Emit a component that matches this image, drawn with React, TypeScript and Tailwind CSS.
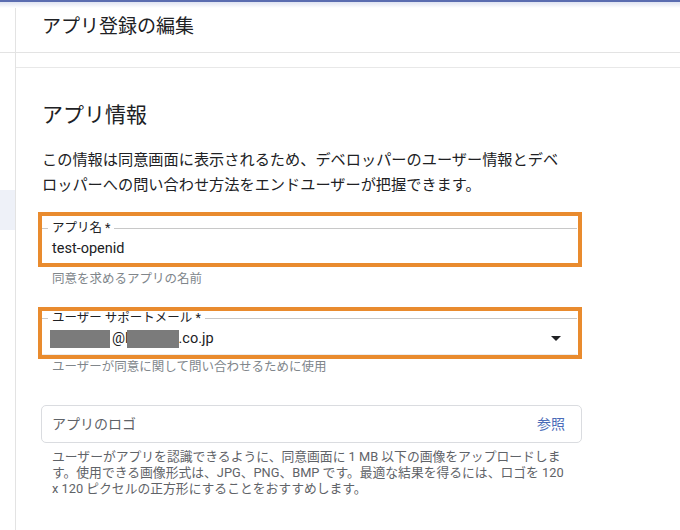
import React from 'react';

const FONT = "font-['Roboto','Noto_Sans_CJK_JP',sans-serif]";

const OutlinedLabel = ({ text }: { text: string }) => (
  <div className="flex items-center h-[14px]">
    <div className="w-[6px] h-px bg-[#c8c8c8]" />
    <span className="px-[4px] text-[12.5px] leading-[14px] text-[#202124]">{text}</span>
    <div className="flex-1 h-px bg-[#c8c8c8]" />
  </div>
);

const App = () => {
  return (
    <div className={`relative w-[680px] h-[530px] overflow-hidden bg-white text-[#202124] ${FONT}`}>
      {/* top app bar shadow */}
      <div className="absolute top-0 left-0 right-0 h-[2px] bg-[#5b6db0]" />
      <div className="absolute top-[2px] left-0 right-0 h-[6px] bg-gradient-to-b from-[#dfe3f1] to-white" />

      <div className="flex h-full">
        {/* left nav strip */}
        <div className="w-[16px] shrink-0 flex flex-col border-r border-[#e3e3e3]">
          <div className="h-[53px] border-b border-[#e3e3e3]" />
          <div className="h-[137px]" />
          <div className="h-[40px] bg-[#eef1f8]" />
        </div>

        <div className="flex-1 flex flex-col">
          <div className="h-[53px] border-b border-[#e3e3e3] flex items-center pl-[26px] pt-[1px]">
            <h1 className="text-[19px] leading-none text-[#202124]">アプリ登録の編集</h1>
          </div>
          <div className="h-[15px] border-b border-[#e8e8e8]" />

          <div className="pl-[26px] flex flex-col">
            <h2 className="mt-[32px] text-[21px] leading-[30px] text-[#202124]">アプリ情報</h2>
            <p className="mt-[18px] text-[15.2px] leading-[25px] text-[#202124] whitespace-nowrap">
              この情報は同意画面に表示されるため、デベロッパーのユーザー情報とデベ
              <br />
              ロッパーへの問い合わせ方法をエンドユーザーが把握できます。
            </p>

            {/* App name */}
            <div className="mt-[14px] ml-[-4px] w-[544px] h-[55px] border-4 border-[#e98b2e] flex flex-col pr-[1px] pt-[5px]">
              <OutlinedLabel text="アプリ名 *" />
              <div className="pl-[10px] mt-[4px] text-[14.5px] leading-[20px] text-[#202124]">test-openid</div>
            </div>
            <div className="pl-[10px] mt-[4px] text-[12.5px] leading-[16px] text-[#80868b]">同意を求めるアプリの名前</div>

            {/* Support email */}
            <div className="mt-[20px] ml-[-4px] w-[544px] h-[52px] border-4 border-[#e98b2e] flex flex-col pr-[1px]">
              <OutlinedLabel text="ユーザー サポートメール *" />
              <div className="flex-1 flex items-center pl-[8px] pr-[16px] pb-[2px] border-b border-[#ececec]">
                <div className="flex items-center text-[14.5px] leading-[20px] text-[#202124]">
                  <span className="w-[60px] h-[18px] bg-[#7b7b7b]" />
                  <span className="ml-[2px]">@l</span>
                  <span className="w-[52px] h-[18px] bg-[#7b7b7b] ml-[-2px]" />
                  <span>.co.jp</span>
                </div>
                <div className="ml-auto w-0 h-0 border-l-[5px] border-r-[5px] border-t-[5px] border-l-transparent border-r-transparent border-t-[#202124]" />
              </div>
            </div>
            <div className="pl-[10px] text-[12.5px] leading-[16px] text-[#80868b]">ユーザーが同意に関して問い合わせるために使用</div>

            {/* Logo */}
            <div className="mt-[30px] ml-[-1px] w-[541px] h-[38px] border border-[#dadce0] rounded-[5px] flex items-center pl-[10px] pr-[16px]">
              <span className="text-[14px] text-[#5f6368]">アプリのロゴ</span>
              <span className="ml-auto text-[14px] text-[#4a6bb8]">参照</span>
            </div>
            <p className="mt-[6px] pl-[10px] text-[12.8px] leading-[16px] text-[#5f6368] whitespace-nowrap">
              ユーザーがアプリを認識できるように、同意画面に 1 MB 以下の画像をアップロードしま
              <br />
              す。使用できる画像形式は、JPG、PNG、BMP です。最適な結果を得るには、ロゴを 120
              <br />
              x 120 ピクセルの正方形にすることをおすすめします。
            </p>
          </div>
        </div>
      </div>
    </div>
  );
};

export default App;
